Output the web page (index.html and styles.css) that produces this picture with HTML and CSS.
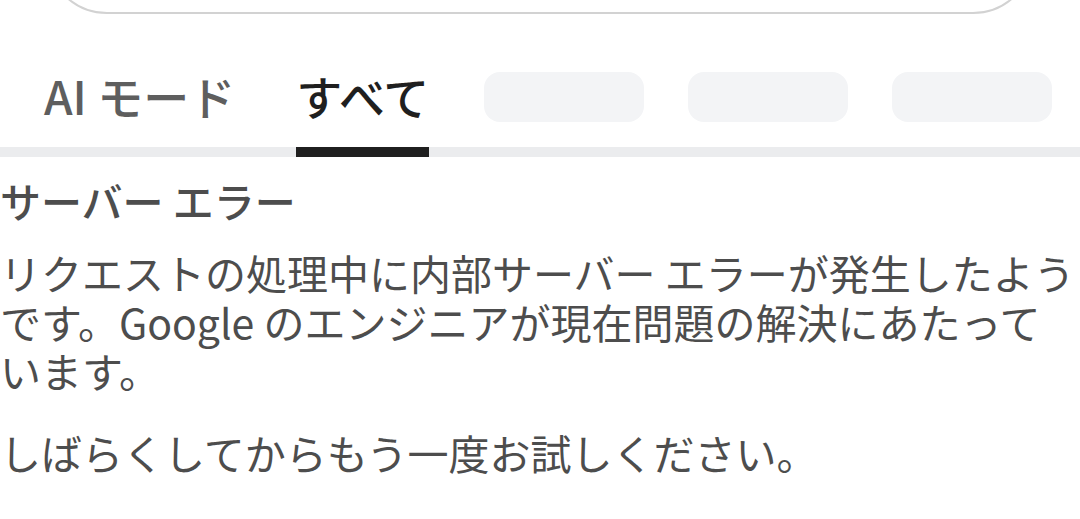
FILE: index.html
```html
<!DOCTYPE html>
<html lang="ja">
<head>
<meta charset="utf-8">
<title>サーバー エラー</title>
<link rel="stylesheet" href="styles.css">
</head>
<body>
<header class="top">
  <div class="search-box"></div>
</header>
<nav class="tabs">
  <a class="tab">AI モード</a>
  <a class="tab active">すべて</a>
  <span class="ph ph-first"></span>
  <span class="ph"></span>
  <span class="ph"></span>
</nav>
<main class="content">
  <h1 class="title">サーバー エラー</h1>
  <p class="msg">リクエストの処理中に内部サーバー エラーが発生したようです。Google のエンジニアが現在問題の解決にあたっています。</p>
  <p class="msg msg-2">しばらくしてからもう一度お試しください。</p>
</main>
</body>
</html>
```
FILE: styles.css
```css
html, body {
  margin: 0;
  padding: 0;
  background: #ffffff;
  overflow: hidden;
}
body {
  width: 1080px;
  height: 519px;
  font-family: "Noto Sans CJK JP", "Noto Sans", sans-serif;
}
.top {
  padding: 0 46px;
}
.search-box {
  height: 122px;
  margin-top: -108px;
  border: 2px solid #d2d2d2;
  border-radius: 61px;
  box-sizing: border-box;
}
.tabs {
  display: flex;
  align-items: flex-start;
  padding: 58px 0 0 44px;
  border-bottom: 10px solid #ebecee;
}
.tab {
  font-size: 46px;
  line-height: 46px;
  font-weight: 500;
  color: #5e5e5e;
  padding-bottom: 29px;
  margin-bottom: -10px;
  border-bottom: 10px solid transparent;
  white-space: nowrap;
  margin-right: 61px;
}
.tab.active {
  color: #1f1f1f;
  border-bottom-color: #1f1f1f;
  margin-right: 55px;
}
.ph {
  flex: none;
  width: 160px;
  height: 50px;
  border-radius: 16px;
  background: #f3f4f6;
  margin-right: 44px;
}
.content {
  color: #4d4d4d;
  font-size: 41px;
  line-height: 49px;
}
.title {
  margin: 19px 0 0;
  font-size: 41px;
  line-height: 49px;
  font-weight: 500;
}
.msg {
  margin: 23px 0 0;
}
.msg-2 {
  margin-top: 33px;
}
```
